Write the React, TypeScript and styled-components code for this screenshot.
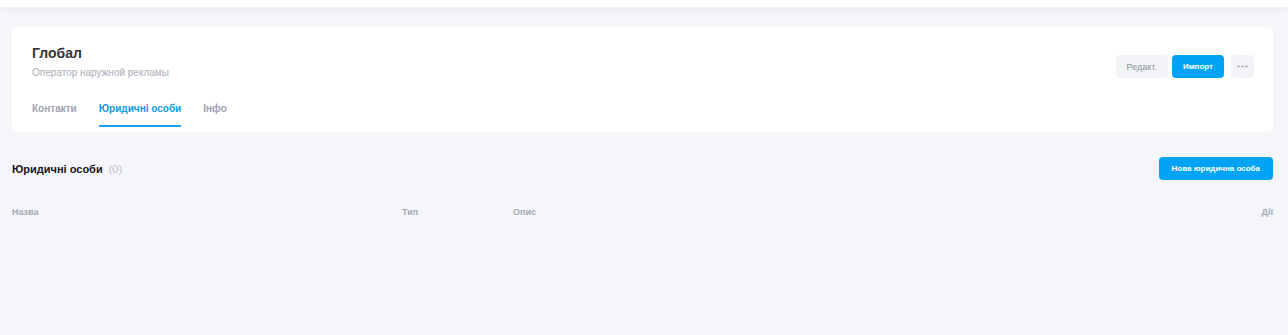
import React, { FC } from "react"
import styled, { createGlobalStyle } from "styled-components"

const GlobalStyle = createGlobalStyle`
  html, body {
    margin: 0;
    padding: 0;
    background: #f4f6f9;
    font-family: "Liberation Sans", Arial, sans-serif;
  }
`

const TopBar = styled.div`
  height: 7px;
  background: #ffffff;
  box-shadow: 0 2px 10px rgba(30, 40, 70, 0.06);
`

const Page = styled.main`
  padding: 20px 15px 0 12px;
`

const Card = styled.section`
  background: #ffffff;
  border-radius: 6px;
  padding: 18px 19px 0 20px;
  display: flex;
  justify-content: space-between;
  align-items: flex-start;
`

const Info = styled.div`
  display: flex;
  flex-direction: column;
`

const Title = styled.h1`
  margin: 0;
  font-size: 14px;
  line-height: 17px;
  font-weight: 700;
  color: #34343b;
`

const Subtitle = styled.div`
  margin-top: 4px;
  font-size: 10px;
  line-height: 13px;
  color: #a9adb9;
`

const Tabs = styled.nav`
  display: flex;
  gap: 22px;
  margin-top: 23px;
`

const Tab = styled.a<{ $active?: boolean }>`
  font-size: 10px;
  line-height: 13px;
  font-weight: 700;
  color: ${ p => p.$active ? "#0a9ce4" : "#9ea1ae" };
  padding-bottom: 10px;
  border-bottom: 2px solid ${ p => p.$active ? "#1aa0e6" : "transparent" };
  margin-bottom: 5px;
  cursor: pointer;
`

const Actions = styled.div`
  display: flex;
  gap: 4px;
  margin-top: 10px;
`

const Button = styled.button<{ $primary?: boolean }>`
  height: 23px;
  border: 0;
  border-radius: 4px;
  padding: 0 11px;
  font-family: inherit;
  font-size: ${ p => p.$primary ? "8px" : "9px" };
  font-weight: ${ p => p.$primary ? 700 : 400 };
  color: ${ p => p.$primary ? "#ffffff" : "#8d909b" };
  background: ${ p => p.$primary ? "#00a3f5" : "#f2f4f8" };
  cursor: pointer;
`

const MoreButton = styled(Button)`
  width: 23px;
  padding: 0;
  margin-left: 3px;
  display: flex;
  align-items: center;
  justify-content: center;
`

const SectionHead = styled.div`
  display: flex;
  justify-content: space-between;
  align-items: center;
  margin-top: 25px;
`

const SectionTitle = styled.h2`
  margin: 0;
  font-size: 11px;
  font-weight: 700;
  color: #14151a;
`

const Count = styled.span`
  margin-left: 6px;
  font-weight: 400;
  color: #bfc2cc;
`

const NewButton = styled(Button)`
  padding: 0 13px;
`

const TableHead = styled.div`
  display: grid;
  grid-template-columns: 390px 111px 1fr auto;
  margin-top: 26px;
  font-size: 9px;
  line-height: 12px;
  font-weight: 700;
  color: #a5a8b6;
`

const App: FC = () => (
  <>
    <GlobalStyle />
    <TopBar />
    <Page>
      <Card>
        <Info>
          <Title>Глобал</Title>
          <Subtitle>Оператор наружной рекламы</Subtitle>
          <Tabs>
            <Tab>Контакти</Tab>
            <Tab $active>Юридичні особи</Tab>
            <Tab>Інфо</Tab>
          </Tabs>
        </Info>
        <Actions>
          <Button>Редакт.</Button>
          <Button $primary>Импорт</Button>
          <MoreButton>
            <svg width="11" height="3" viewBox="0 0 11 3">
              <circle cx="1.5" cy="1.5" r="1.1" fill="#9ea1ae" />
              <circle cx="5.5" cy="1.5" r="1.1" fill="#9ea1ae" />
              <circle cx="9.5" cy="1.5" r="1.1" fill="#9ea1ae" />
            </svg>
          </MoreButton>
        </Actions>
      </Card>
      <SectionHead>
        <SectionTitle>Юридичні особи<Count>(0)</Count></SectionTitle>
        <NewButton $primary>Нова юридична особа</NewButton>
      </SectionHead>
      <TableHead>
        <span>Назва</span>
        <span>Тип</span>
        <span>Опис</span>
        <span>Дії</span>
      </TableHead>
    </Page>
  </>
)

export default App
